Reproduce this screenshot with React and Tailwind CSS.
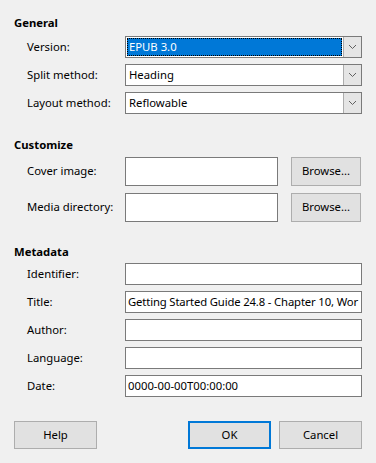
import React from "react";

const Chevron = () => (
  <svg width="9" height="6" viewBox="0 0 9 6" className="block">
    <path d="M1 1 L4.5 4.5 L8 1" fill="none" stroke="#606060" strokeWidth="1" />
  </svg>
);

function Combo({ value, selected }) {
  return (
    <div className="flex h-[22px] w-[237px] border border-[#7a7a7a] bg-white">
      <div className="flex-1 p-px min-w-0">
        <div
          className={
            selected
              ? "h-full bg-[#0078d7] text-white border border-dotted border-black flex items-center pl-px leading-none"
              : "h-full flex items-center pl-[2px] text-black leading-none"
          }
        >
          {value}
        </div>
      </div>
      <div className="w-[18px] bg-[#e5e5e5] border-l border-[#adadad] flex items-center justify-center">
        <Chevron />
      </div>
    </div>
  );
}

function Field({ value, w = "w-[237px]", h = "h-[22px]", extra = "" }) {
  return (
    <div
      className={`${w} ${h} ${extra} border border-[#7a7a7a] bg-white flex items-center pl-[2px] overflow-hidden whitespace-nowrap leading-none`}
    >
      {value}
    </div>
  );
}

function Row({ label, children, h = "h-[22px]" }) {
  return (
    <div className={`flex items-center ${h}`}>
      <div className="ml-[13px] w-[98px] text-black">{label}</div>
      {children}
    </div>
  );
}

function Btn({ children, focused }) {
  return (
    <div
      className={
        focused
          ? "w-[83px] h-[28px] border-2 border-[#0078d7] bg-[#e1e1e1] flex items-center justify-center"
          : "w-[83px] h-[28px] border border-[#adadad] bg-[#e1e1e1] flex items-center justify-center"
      }
    >
      {children}
    </div>
  );
}

export default function App() {
  return (
    <div
      className="w-[376px] h-[463px] bg-[#f0f0f0] pl-[14px] pr-[14px] pt-[14px] text-[11.3px] text-black"
      style={{ fontFamily: '"Noto Sans", "Open Sans", sans-serif' }}
    >
      <div className="h-[16px] leading-[17px] font-bold">General</div>
      <div className="mt-[6px] flex flex-col gap-[6px]">
        <Row label="Version:">
          <Combo value="EPUB 3.0" selected />
        </Row>
        <Row label="Split method:">
          <Combo value="Heading" />
        </Row>
        <Row label="Layout method:">
          <Combo value="Reflowable" />
        </Row>
      </div>

      <div className="mt-[22px] h-[16px] leading-[17px] font-bold">Customize</div>
      <div className="mt-[5px] flex flex-col gap-[7px]">
        <Row label="Cover image:" h="h-[29px]">
          <Field w="w-[153px]" h="h-[29px]" value="" />
          <div className="ml-[13px] w-[70px] h-[29px] border border-[#adadad] bg-[#e1e1e1] flex items-center justify-center">
            Browse...
          </div>
        </Row>
        <Row label="Media directory:" h="h-[29px]">
          <Field w="w-[153px]" h="h-[29px]" value="" />
          <div className="ml-[13px] w-[70px] h-[29px] border border-[#adadad] bg-[#e1e1e1] flex items-center justify-center">
            Browse...
          </div>
        </Row>
      </div>

      <div className="mt-[21px] h-[16px] leading-[17px] font-bold">Metadata</div>
      <div className="mt-[4px] flex flex-col gap-[6px]">
        <Row label="Identifier:">
          <Field value="" />
        </Row>
        <Row label="Title:">
          <Field
            value="Getting Started Guide 24.8 - Chapter 10, Wor"
            extra="tracking-[-0.15px]"
          />
        </Row>
        <Row label="Author:">
          <Field value="" />
        </Row>
        <Row label="Language:">
          <Field value="" />
        </Row>
        <Row label="Date:">
          <Field value="0000-00-00T00:00:00" />
        </Row>
      </div>

      <div className="mt-[24px] flex">
        <Btn>Help</Btn>
        <div className="flex-1" />
        <div className="flex gap-[8px]">
          <Btn focused>OK</Btn>
          <Btn>Cancel</Btn>
        </div>
      </div>
    </div>
  );
}
